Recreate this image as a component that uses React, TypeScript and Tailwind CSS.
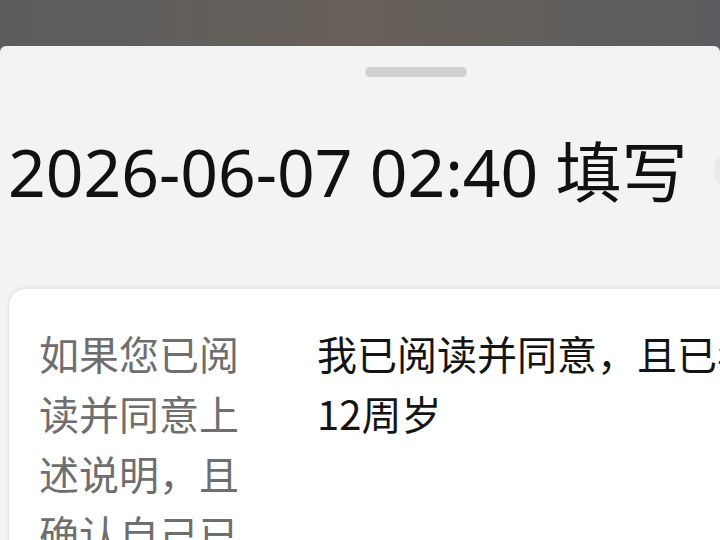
import React from "react";

const agreeLabel = "如果您已阅读并同意上述说明，且确认自己已年满12周岁";
const agreeOption = "我已阅读并同意，且已年满12周岁";

export default function App() {
  return (
    <div
      className="w-[720px] h-[540px] overflow-hidden flex flex-col bg-[#5e5e5f]"
      style={{ fontFamily: '"Noto Sans CJK SC", "Noto Sans", sans-serif' }}
    >
      {/* dimmed page behind the sheet */}
      <div className="h-[46px] shrink-0 bg-gradient-to-r from-[#5b5c5e] via-[#686159] to-[#5b5c5f]" />

      {/* bottom sheet */}
      <div className="flex-1 bg-[#f2f3f5] rounded-t-[6px] flex flex-col">
        <div className="flex pt-[21px] pl-[365px]">
          <div className="w-[102px] h-[10px] rounded-full bg-[#cfd0d2]" />
        </div>

        <div className="flex items-center mt-[61px] pl-[8px] whitespace-nowrap">
          <h1
            className="text-[66px] leading-[66px] text-[#111] font-normal"
            style={{ fontFamily: '"Noto Sans", "Noto Sans CJK SC", sans-serif' }}
          >
            2026-06-07 02:40 填写
          </h1>
          <div className="ml-[26px] w-[44px] h-[44px] shrink-0 rounded-full bg-[#e9eaec]" />
        </div>

        <div className="mt-[84px] ml-[8px] w-[900px] flex-1 bg-white rounded-[18px] border border-[#e4e5e7] shadow-[0_-1px_3px_rgba(0,0,0,0.06)] pl-[30px] pt-[34px]">
          <div className="grid grid-cols-[206px_490px] gap-x-[72px] text-[40px] leading-[60px]">
            <div className="text-[#6e6e6e]">{agreeLabel}</div>
            <div className="text-[#141414]">{agreeOption}</div>
          </div>
        </div>
      </div>
    </div>
  );
}
